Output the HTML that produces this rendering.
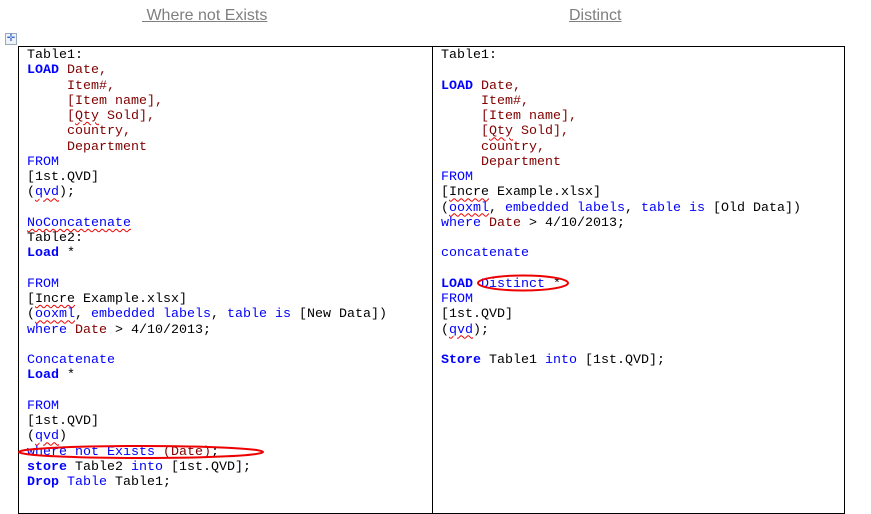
<!DOCTYPE html>
<html><head><style>
body{margin:0;width:871px;height:513px;background:#fff;position:relative;overflow:hidden}
.h{position:absolute;top:7px;font:16px "Liberation Sans",sans-serif;color:#7f7f7f;text-decoration:underline;white-space:pre}
.box{position:absolute;left:18px;top:46px;width:825px;height:466px;border:1px solid #000;border-bottom:1px solid #000}
.div{position:absolute;left:432px;top:46px;width:1px;height:467px;background:#000}
pre{position:absolute;top:48px;margin:0;font:13.33px/15.25px "Liberation Mono",monospace;color:#000}
.k{color:#0000ff}.b{color:#0000ff;font-weight:bold}.r{color:#800000}
.w{text-decoration:underline wavy #e00;text-decoration-thickness:1px;text-underline-offset:2px}
</style></head><body>
<div class="h" style="left:142px"> Where not Exists</div>
<div class="h" style="left:569px">Distinct</div>
<div style="position:absolute;left:5px;top:33px;width:10px;height:10px;border:1px solid #9ab;background:#eef3fa;font:10px/10px 'DejaVu Sans';color:#36c;text-align:center">✛</div>
<div class="box"></div><div class="div"></div>
<pre style="left:27px">Table1:
<span class="b">LOAD</span> <span class="r">Date,
     Item#,
     [Item name],
     [<span class="w">Qty</span> Sold],
     country,
     Department</span>
<span class="k">FROM</span>
[1st.QVD]
(<span class="k w">qvd</span>);

<span class="k w">NoConcatenate</span>
Table2:
<span class="b">Load</span> *

<span class="k">FROM</span>
[<span class="w">Incre</span> Example.xlsx]
(<span class="k w">ooxml</span>, <span class="k">embedded labels</span>, <span class="k">table is</span> [New Data])
<span class="k">where</span> <span class="r">Date</span> &gt; 4/10/2013;

<span class="k">Concatenate</span>
<span class="b">Load</span> *

<span class="k">FROM</span>
[1st.QVD]
(<span class="k w">qvd</span>)
<span class="k">where not Exists</span> <span class="r">(Date)</span>;
<span class="b">store</span> Table2 <span class="k">into</span> [1st.QVD];
<span class="b">Drop</span> <span class="k">Table</span> Table1;</pre>
<pre style="left:441px">Table1:

<span class="b">LOAD</span> <span class="r">Date,
     Item#,
     [Item name],
     [<span class="w">Qty</span> Sold],
     country,
     Department</span>
<span class="k">FROM</span>
[<span class="w">Incre</span> Example.xlsx]
(<span class="k w">ooxml</span>, <span class="k">embedded labels</span>, <span class="k">table is</span> [Old Data])
<span class="k">where</span> <span class="r">Date</span> &gt; 4/10/2013;

<span class="k">concatenate</span>

<span class="b">LOAD</span> <span class="k">Distinct</span> *
<span class="k">FROM</span>
[1st.QVD]
(<span class="k w">qvd</span>);

<span class="b">Store</span> Table1 <span class="k">into</span> [1st.QVD];</pre>
<svg style="position:absolute;left:0;top:0" width="871" height="513">
<ellipse cx="141" cy="452" rx="122" ry="6" fill="none" stroke="#e00" stroke-width="2"/>
<ellipse cx="523" cy="283" rx="45" ry="7.5" fill="none" stroke="#e00" stroke-width="2"/>
</svg>
</body></html>
